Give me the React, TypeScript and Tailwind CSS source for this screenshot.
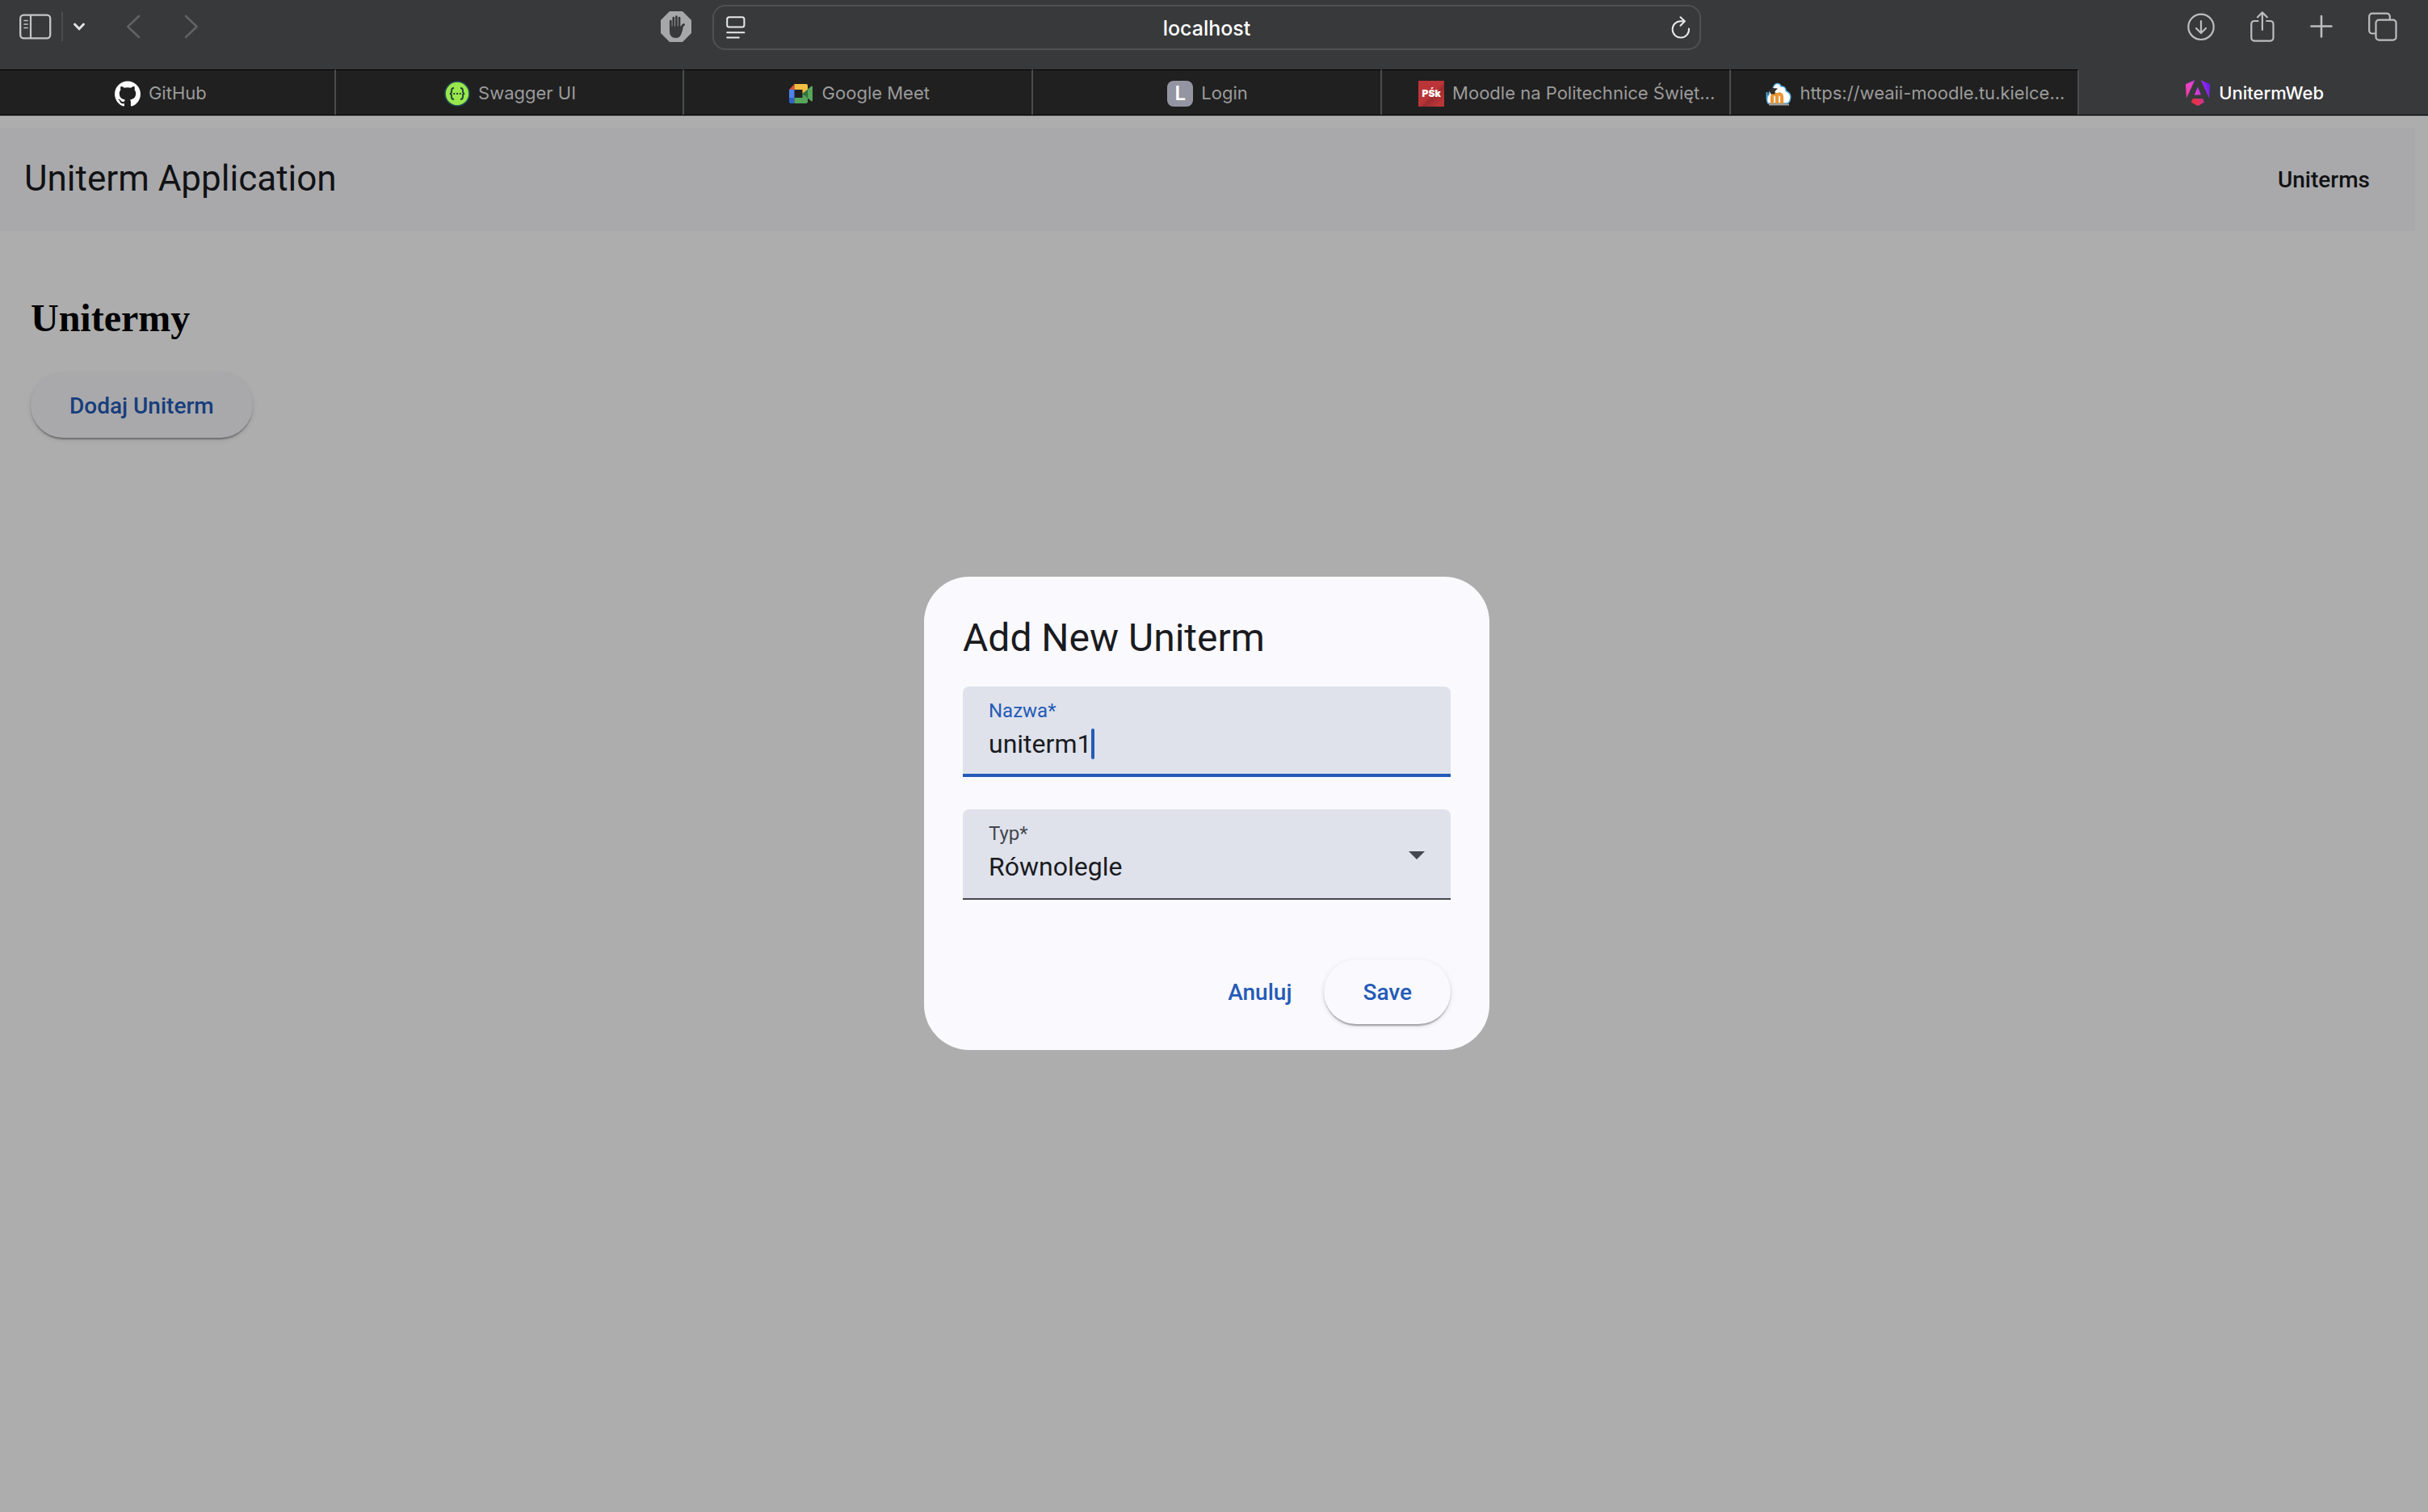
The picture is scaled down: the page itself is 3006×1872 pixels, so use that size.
import type { ReactNode } from "react";
import { useState } from "react";
import { SiAngular, SiGithub } from "react-icons/si";

const chromeFont = "font-['Inter',sans-serif]";
const materialFont = "font-['Roboto',sans-serif]";

/* ---------- Toolbar icons ---------- */

function SidebarIcon() {
  return (
    <svg width="40" height="32" viewBox="0 0 40 32" fill="none" stroke="#c3c5c6" strokeLinecap="round">
      <rect x="1.2" y="1.7" width="37" height="28.6" rx="4" strokeWidth="2.3" />
      <path d="M14 2v28" strokeWidth="2.2" strokeLinecap="butt" />
      <path d="M6 8.5h4M6 13h4M6 17.500h4" strokeWidth="1.7" />
    </svg>
  );
}

function SmallChevronIcon() {
  return (
    <svg width="16" height="12" viewBox="0 0 16 12" fill="none" stroke="#e2e2e2" strokeWidth="3" strokeLinecap="round" strokeLinejoin="round">
      <path d="M2.500 3 8 8.800 13.500 3" />
    </svg>
  );
}

function BackIcon() {
  return (
    <svg width="18" height="30" viewBox="0 0 18 30" fill="none" stroke="#616264" strokeWidth="2.600" strokeLinecap="round" strokeLinejoin="round">
      <path d="M16 2 2.300 15 16 28" />
    </svg>
  );
}

function ForwardIcon() {
  return (
    <svg width="18" height="30" viewBox="0 0 18 30" fill="none" stroke="#616264" strokeWidth="2.600" strokeLinecap="round" strokeLinejoin="round">
      <path d="M2 2 15.700 15 2 28" />
    </svg>
  );
}

function BlockerIcon() {
  return (
    <svg width="38" height="38" viewBox="0 0 38 38">
      <path d="M11 0h16l11 11v16L27 38H11L0 27V11z" fill="#a6a7a8" />
      <g stroke="#38393b" strokeWidth="2.700" strokeLinecap="round" fill="none">
        <path d="M12.300 12v12M15.800 8v13M19.400 6.500v14M23 8v13" />
        <path d="M24.600 24c.8-3.500 1.600-6.500 4-7.500" strokeWidth="2.900" />
      </g>
      <path d="M11 18.500h13.400l1.600 1.500 1.800-1.500c-.6 4-1.300 7.500-2.800 10.500-1.200 2.500-3 4-6 4-5.500 0-8-3-8-8.500z" fill="#38393b" />
    </svg>
  );
}

function PageMenuIcon() {
  return (
    <svg width="24" height="28" viewBox="0 0 24 28" fill="none" stroke="#e9e9ea" strokeWidth="2" strokeLinecap="round">
      <rect x="1.200" y="1.200" width="21.200" height="12.400" rx="2.500" />
      <path d="M1.200 20.200h21.200M1.200 26.500h14.600" />
    </svg>
  );
}

function ReloadIcon() {
  return (
    <svg width="24" height="28" viewBox="0 0 24 28" fill="none" stroke="#e9e9ea" strokeWidth="2" strokeLinecap="round" strokeLinejoin="round">
      <path d="M22 15.500A10.200 10.200 0 1 1 11.800 6.200h4.500" />
      <path d="M11.500 1.300 16.800 6.300 11.500 11.700" />
    </svg>
  );
}

function DownloadIcon() {
  return (
    <svg width="34" height="38" viewBox="0 0 34 38" fill="none" stroke="#bcbdbe" strokeWidth="2.200" strokeLinecap="round" strokeLinejoin="round">
      <circle cx="17" cy="19.300" r="15.700" />
      <path d="M17 12v14M11 21l6 6 6-6" />
    </svg>
  );
}

function ShareIcon() {
  return (
    <svg width="30" height="38" viewBox="0 0 30 38" fill="none" stroke="#bcbdbe" strokeWidth="2.200" strokeLinecap="round" strokeLinejoin="round">
      <path d="M9.500 12H5a3.700 3.700 0 0 0-3.700 3.700v17.200A3.700 3.700 0 0 0 5 36.600h19.800a3.700 3.700 0 0 0 3.700-3.700V15.700A3.700 3.700 0 0 0 24.800 12h-4.500" />
      <path d="M14.900 23V1.700M9 7.300l5.900-5.900 5.900 5.900" />
    </svg>
  );
}

function PlusIcon() {
  return (
    <svg width="28" height="38" viewBox="0 0 28 38" fill="none" stroke="#bcbdbe" strokeWidth="2.600" strokeLinecap="round">
      <path d="M14 6v25.500M1.500 18.500h25" />
    </svg>
  );
}

function TabOverviewIcon() {
  return (
    <svg width="36" height="38" viewBox="0 0 36 38" fill="none" stroke="#bcbdbe" strokeWidth="2.200" strokeLinejoin="round">
      <path d="M9.500 27.500H5A3.800 3.800 0 0 1 1.200 23.700V6.500A3.800 3.800 0 0 1 5 2.700h18a3.800 3.800 0 0 1 3.800 3.800v4" />
      <rect x="9.500" y="10.600" width="25" height="25" rx="3.800" />
    </svg>
  );
}

/* ---------- Favicons ---------- */

function SwaggerIcon() {
  return (
    <svg width="32" height="32" viewBox="0 0 32 32" fill="none">
      <circle cx="16" cy="16" r="15" fill="#98e84c" stroke="#1f4a52" strokeWidth="1.600" />
      <path d="M12 9c-2.600 0-3 1-3 3v1.500c0 1.700-.6 2.500-2.200 2.500 1.600 0 2.200.8 2.200 2.500V20c0 2 .4 3 3 3M20 9c2.600 0 3 1 3 3v1.500c0 1.700.6 2.500 2.200 2.500-1.600 0-2.200.8-2.200 2.500V20c0 2-.4 3-3 3" stroke="#24403c" strokeWidth="1.900" />
      <path d="M11.300 15h2v2h-2zM15 15h2v2h-2zM18.700 15h2v2h-2z" fill="#24403c" />
    </svg>
  );
}

function MeetIcon() {
  return (
    <svg width="32" height="32" viewBox="0 0 32 32">
      <path d="M7.500 4v7H1z" fill="#d9503f" />
      <path d="M1 11h6.500v10H1z" fill="#4f82ee" />
      <path d="M1 21h6.500v7H3a2 2 0 0 1-2-2z" fill="#2f62c9" />
      <path d="M7.500 4H22a2 2 0 0 1 2 2v6l-6.500 4v-5h-10z" fill="#f2bd42" />
      <path d="M7.500 21h10v-5l6.500 4v6a2 2 0 0 1-2 2H7.500z" fill="#58a55c" />
      <path d="M17.500 16 24 10.500v11z" fill="#34733c" />
      <path d="m24 10.500 4.400-3.700c.7-.5 1.600 0 1.600.8v16.800c0 .8-.9 1.300-1.600.8L24 21.500z" fill="#58a55c" />
    </svg>
  );
}

function LetterIcon() {
  return (
    <span className="flex size-8 items-center justify-center rounded-lg bg-[#9395a2] text-2xl font-semibold text-white">
      L
    </span>
  );
}

function PskIcon() {
  return (
    <span className="flex size-8 items-center justify-center bg-[linear-gradient(135deg,#bb3538_50%,#9c2c30_60%,#bb3538_85%)] text-xs font-black text-white">
      PŚk
    </span>
  );
}

function MoodleIcon() {
  return (
    <svg width="32" height="32" viewBox="0 0 32 32" fill="none">
      <path d="M3 28c-2-3-2-8 1-11 0-4 2.500-6 5-7 .5-4 3-6.500 5.500-6.500s4 2 4.500 3.500c4-.5 6 2 6 5.500 4 2 6.500 5.500 5.500 9.500-.5 4-2.500 6-5 6z" fill="#fff" stroke="#57aee4" strokeWidth="1.500" />
      <path d="M4 29.500h25" stroke="#a5a5a5" strokeWidth="2" />
      <path d="M8 28.500v-8c0-5.500 6-5.500 6 0v8m0-8c0-5.500 6-5.500 6 0v8" stroke="#ea9636" strokeWidth="4.200" />
      <path d="M2 12.500 8 9l7 .5-3.500 3.500v3.500H6.500L5 13.500z" fill="#2e2e2e" />
      <path d="M1.500 14v9" stroke="#57aee4" strokeWidth="1.800" />
    </svg>
  );
}

function AngularIcon() {
  return (
    <>
      <svg width="0" height="0" className="absolute" aria-hidden="true">
        <linearGradient id="angular-shield" x1="0" y1="0.700" x2="1" y2="0.300">
          <stop offset="0" stopColor="#ee3f9c" />
          <stop offset="0.350" stopColor="#ea42cf" />
          <stop offset="0.700" stopColor="#a82fe8" />
          <stop offset="1" stopColor="#6a1cf0" />
        </linearGradient>
        <linearGradient id="angular-base" x1="0" y1="0" x2="1" y2="0">
          <stop offset="0" stopColor="#e5303c" />
          <stop offset="0.550" stopColor="#e43358" />
          <stop offset="1" stopColor="#c42f9c" />
        </linearGradient>
      </svg>
      <span className="grid size-8">
        <SiAngular size={32} fill="url(#angular-shield)" className="col-start-1 row-start-1" />
        <svg width="32" height="32" viewBox="0 0 24 24" className="col-start-1 row-start-1">
          <path d="M16.712 17.711H7.288l-1.204 2.916L12 24l5.916-3.373z" fill="url(#angular-base)" />
        </svg>
      </span>
    </>
  );
}

/* ---------- Browser window ---------- */

function IconButton({ label, children, className = "" }: { label: string; children: ReactNode; className?: string }) {
  return (
    <button type="button" aria-label={label} className={`flex shrink-0 items-center justify-center ${className}`}>
      {children}
    </button>
  );
}

function Toolbar() {
  return (
    <div className="grid h-[86px] grid-cols-[882fr_1224fr_900fr] items-start bg-[#38393b] pt-1.5">
      <div className="flex h-[54px] items-center justify-between pr-[26px] pl-6">
        <div className="flex items-center">
          <IconButton label="Show sidebar">
            <SidebarIcon />
          </IconButton>
          <span className="ml-3 h-9 w-0.5 bg-[#4b4c4e]" />
          <IconButton label="Tab groups" className="ml-3">
            <SmallChevronIcon />
          </IconButton>
          <IconButton label="Back" className="ml-[50px]">
            <BackIcon />
          </IconButton>
          <IconButton label="Forward" className="ml-[54px]">
            <ForwardIcon />
          </IconButton>
        </div>
        <IconButton label="Content blocker">
          <BlockerIcon />
        </IconButton>
      </div>

      <div className="grid h-14 grid-cols-[24px_1fr_24px] items-center rounded-2xl border-2 border-[#505153] pr-[11px] pl-[15px]">
        <IconButton label="Page menu">
          <PageMenuIcon />
        </IconButton>
        <input
          aria-label="Address"
          defaultValue="localhost"
          className="h-full w-full min-w-0 bg-transparent pt-0.5 pr-1 text-center text-[25px] leading-8 font-medium text-white outline-none"
        />
        <IconButton label="Reload">
          <ReloadIcon />
        </IconButton>
      </div>

      <div className="flex h-[54px] items-center justify-end gap-11 pr-[38px]">
        <IconButton label="Downloads">
          <DownloadIcon />
        </IconButton>
        <IconButton label="Share">
          <ShareIcon />
        </IconButton>
        <IconButton label="New tab">
          <PlusIcon />
        </IconButton>
        <IconButton label="Tab overview">
          <TabOverviewIcon />
        </IconButton>
      </div>
    </div>
  );
}

const tabs: { title: string; icon: ReactNode; padding: string }[] = [
  { title: "GitHub", icon: <SiGithub size={32} className="text-white" />, padding: "px-0" },
  { title: "Swagger UI", icon: <SwaggerIcon />, padding: "pl-0.5" },
  { title: "Google Meet", icon: <MeetIcon />, padding: "pl-0.5" },
  { title: "Login", icon: <LetterIcon />, padding: "pl-0.5" },
  { title: "Moodle na Politechnice Święt...", icon: <PskIcon />, padding: "pl-7" },
  { title: "https://weaii-moodle.tu.kielce...", icon: <MoodleIcon />, padding: "pl-7" },
];

function TabBar() {
  return (
    <div className="overflow-hidden border-b border-black bg-[#38393b]">
      <div role="tablist" className="-ml-4 grid h-14 grid-cols-7">
        {tabs.map((tab) => (
          <button
            key={tab.title}
            type="button"
            role="tab"
            aria-selected="false"
            className={`flex items-center justify-center gap-2.5 border-t border-r-2 border-t-black border-r-[#4b4c4e] bg-[#202020] pt-0.5 text-[22px] whitespace-nowrap text-[#9b9b9b] ${tab.padding}`}
          >
            {tab.icon}
            <span>{tab.title}</span>
          </button>
        ))}
        <button
          type="button"
          role="tab"
          aria-selected="true"
          className="flex items-center justify-center gap-2.5 pt-0.5 pl-0.5 text-[22px] font-medium whitespace-nowrap text-white"
        >
          <AngularIcon />
          <span>UnitermWeb</span>
        </button>
      </div>
    </div>
  );
}

/* ---------- Application page ---------- */

const raised =
  "shadow-[0_4px_2px_-2px_rgba(0,0,0,0.2),0_2px_2px_rgba(0,0,0,0.14),0_2px_6px_rgba(0,0,0,0.12)]";

function UnitermPage() {
  return (
    <div className="bg-white pt-3.5 pr-4">
      <header className={`flex h-32 items-center justify-between bg-[#faf9fd] pr-8 pl-[30px] text-[#1a1b1f] ${materialFont}`}>
        <span className="pb-0.5 text-[44px] leading-[56px]">Uniterm Application</span>
        <a href="#uniterms" className="px-6 pt-0.5 text-[28px] leading-10 font-medium">
          Uniterms
        </a>
      </header>
      <main className="px-[38px] pt-20">
        <h1 className="mb-10 font-['Liberation_Serif',serif] text-[48px] leading-[56px] font-bold text-black">
          Unitermy
        </h1>
        <button
          type="button"
          className={`h-20 rounded-full bg-[#faf9fd] px-12 pt-0.5 text-[28px] font-medium text-[#245bb7] ${materialFont} ${raised}`}
        >
          Dodaj Uniterm
        </button>
      </main>
    </div>
  );
}

function AddUnitermDialog() {
  const [name, setName] = useState("uniterm1");
  const [kind, setKind] = useState("Równolegle");

  return (
    <div className="absolute inset-0 flex items-center justify-center bg-black/32 pr-[18px] pb-[3px]">
      <form
        role="dialog"
        aria-labelledby="dialog-title"
        className={`w-full max-w-[700px] rounded-[56px] bg-[#faf9fd] px-12 pt-11 pb-8 text-[#1a1b1f] ${materialFont}`}
      >
        <h2 id="dialog-title" className="text-[48px] leading-[64px]">
          Add New Uniterm
        </h2>

        <div className="mt-7 h-28 rounded-t-lg border-b-4 border-[#245bb7] bg-[#dfe2eb] px-8 pt-4">
          <label htmlFor="name" className="block text-2xl leading-7 text-[#245bb7]">
            Nazwa*
          </label>
          <div className="mt-2 flex h-[38px] items-center">
            <input
              id="name"
              value={name}
              onChange={(e) => setName(e.target.value)}
              className="field-sizing-content max-w-full bg-transparent text-[32px] leading-[38px] caret-transparent outline-none"
            />
            <span className="h-[38px] w-1 rounded-sm bg-[#245bb7]" />
          </div>
        </div>

        <div className="relative mt-10 h-28 rounded-t-lg border-b-2 border-[#44474e] bg-[#dfe2eb] px-8 pt-4">
          <label htmlFor="kind" className="block text-2xl leading-7 text-[#44474e]">
            Typ*
          </label>
          <select
            id="kind"
            value={kind}
            onChange={(e) => setKind(e.target.value)}
            className="mt-2 block h-[38px] w-full appearance-none bg-transparent text-[32px] leading-[38px] outline-none"
          >
            <option>Równolegle</option>
          </select>
          <svg width="20" height="10" viewBox="0 0 20 10" className="pointer-events-none absolute top-[52px] right-8">
            <path d="M0 0h20L10 10z" fill="#44474e" />
          </svg>
        </div>

        <div className="mt-[74px] flex items-center justify-end gap-4 text-[28px] font-medium text-[#245bb7]">
          <button type="button" className="h-20 rounded-full px-6 pt-0.5">
            Anuluj
          </button>
          <button type="button" className={`h-20 rounded-full bg-[#faf9fd] px-12 pt-0.5 ${raised}`}>
            Save
          </button>
        </div>
      </form>
    </div>
  );
}

export default function App() {
  return (
    <div className={`flex min-h-screen flex-col bg-white ${chromeFont}`}>
      <Toolbar />
      <TabBar />
      <div className="relative flex-1 border-t border-[#8a8a8a]">
        <UnitermPage />
        <AddUnitermDialog />
      </div>
    </div>
  );
}
